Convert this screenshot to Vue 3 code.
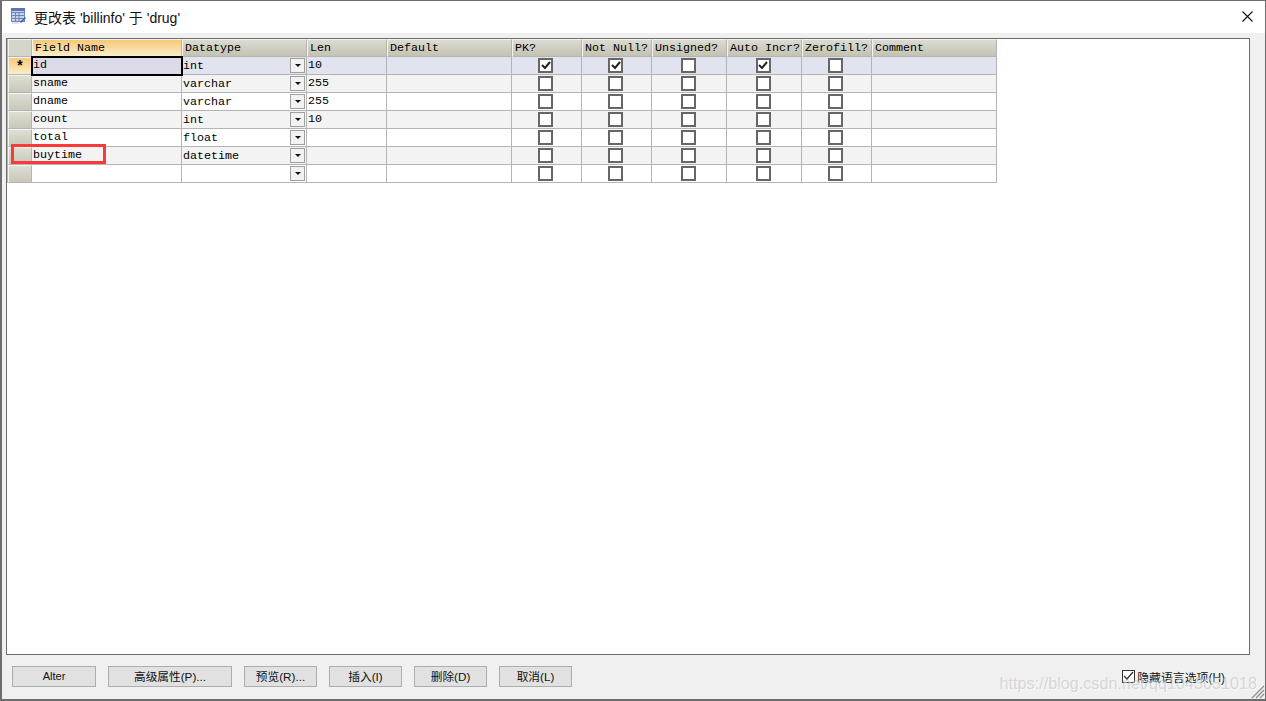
<template>
  <div class="window">
    <div class="titlebar">
      <svg class="app-icon" width="16" height="16" viewBox="0 0 16 16">
        <rect x="0.5" y="0.5" width="13" height="13" fill="#c9d3ee" stroke="#6f84bd" />
        <path d="M1 4.5h12M1 7.5h12M1 10.5h12M4.5 4v9M8 4v9" stroke="#6f84bd" />
        <rect x="0" y="0" width="14" height="3" fill="#5b74b5" />
        <path d="M9 14l5-5 1 1-5 5z" fill="#2d62a8" />
        <path d="M1 15h7" stroke="#c5c5c5" />
      </svg>
      <span class="title">更改表 'billinfo' 于 'drug'</span>
      <svg class="close" width="11" height="11" viewBox="0 0 11 11">
        <path d="M.5.5l10 10M10.5.5l-10 10" stroke="#111" stroke-width="1.1" fill="none" />
      </svg>
    </div>

    <div class="panel">
      <div class="grid">
        <div class="corner"></div>
        <div
          v-for="(col, i) in columns"
          :key="col"
          class="head"
          :class="{ active: i === 0 }"
        >{{ col }}</div>

        <template v-for="(row, r) in rows" :key="r">
          <div class="row-head" :class="{ active: r === 0 }">{{ r === 0 ? '*' : '' }}</div>
          <div class="cell name" :class="rowClass(r)">
            <span>{{ row.name }}</span>
          </div>
          <div class="cell type" :class="rowClass(r)">
            <span class="type-text">{{ row.type }}</span>
            <span class="drop"><i></i></span>
          </div>
          <div class="cell name" :class="rowClass(r)"><span>{{ row.len }}</span></div>
          <div class="cell" :class="rowClass(r)"></div>
          <div v-for="(on, c) in row.flags" :key="c" class="cell check" :class="rowClass(r)">
            <span class="box">
              <svg v-if="on" width="10" height="9" viewBox="0 0 10 9">
                <path d="M1 4l3 3 5-6" stroke="#222" stroke-width="2" fill="none" />
              </svg>
            </span>
          </div>
          <div class="cell" :class="rowClass(r)"></div>
        </template>
      </div>
      <div class="marker"></div>
    </div>

    <div class="footer">
      <button class="alter">Alter</button>
      <button class="adv">高级属性(P)...</button>
      <button class="preview">预览(R)...</button>
      <button class="small">插入(I)</button>
      <button class="small">删除(D)</button>
      <button class="small">取消(L)</button>
      <label class="hide-lang">
        <span class="mini-box">
          <svg width="11" height="10" viewBox="0 0 11 10">
            <path d="M1 5l3 3 6-7" stroke="#333" stroke-width="1.3" fill="none" />
          </svg>
        </span>
        隐藏语言选项(H)
      </label>
    </div>

    <div class="watermark">https://blog.csdn.net/qq1043051018</div>
    <svg class="grip" width="14" height="14" viewBox="0 0 14 14">
      <path d="M13 1L1 13M13 5L5 13M13 9L9 13" stroke="#8e8e8e" stroke-width="1.2" fill="none" />
    </svg>
  </div>
</template>

<script setup>
const columns = [
  'Field Name', 'Datatype', 'Len', 'Default', 'PK?', 'Not Null?',
  'Unsigned?', 'Auto Incr?', 'Zerofill?', 'Comment',
]

const rows = [
  { name: 'id', type: 'int', len: '10', flags: [true, true, false, true, false] },
  { name: 'sname', type: 'varchar', len: '255', flags: [false, false, false, false, false] },
  { name: 'dname', type: 'varchar', len: '255', flags: [false, false, false, false, false] },
  { name: 'count', type: 'int', len: '10', flags: [false, false, false, false, false] },
  { name: 'total', type: 'float', len: '', flags: [false, false, false, false, false] },
  { name: 'buytime', type: 'datetime', len: '', flags: [false, false, false, false, false] },
  { name: '', type: '', len: '', flags: [false, false, false, false, false] },
]

const rowClass = (r) => {
  if (r === 0) return 'selected'
  return r % 2 === 1 ? 'alt' : ''
}
</script>

<style>
html, body {
  margin: 0;
  overflow: hidden;
}
</style>

<style scoped>
.window {
  position: relative;
  box-sizing: border-box;
  width: 1266px;
  height: 701px;
  display: flex;
  flex-direction: column;
  background: #f0f0f0;
  border: 1px solid #6d6d6d;
  border-left-width: 2px;
  border-bottom-width: 2px;
  font-family: "Liberation Sans", "Noto Sans CJK SC", sans-serif;
  color: #111;
}

.titlebar {
  height: 32px;
  flex: none;
  display: flex;
  align-items: center;
  background: #fff;
  padding: 0 12px 0 9px;
}

.app-icon {
  margin-right: 7px;
  margin-bottom: 2px;
}

.title {
  font-size: 14px;
  margin-bottom: 1px;
}

.close {
  margin-left: auto;
  margin-bottom: 2px;
}

.panel {
  position: relative;
  flex: 1;
  margin: 5px 15px 0 4px;
  background: #fff;
  border: 1px solid #6d6d6d;
}

.grid {
  display: grid;
  grid-template-columns: 24px 150px 125px 80px 125px 70px 70px 75px 75px 70px 125px;
  grid-template-rows: 18px repeat(7, 18px);
  width: max-content;
  border-left: 1px solid #b4b4b4;
  font-family: "Liberation Mono", monospace;
  font-size: 11.67px;
  color: #000;
}

.corner,
.head,
.row-head {
  box-sizing: border-box;
  border: 1px solid #f4f4f0;
  border-right: 1px solid #b4b4b4;
  border-bottom: 1px solid #b4b4b4;
}

.corner {
  background: #d6d5c9;
}

.head {
  padding-left: 2px;
  line-height: 16px;
  white-space: nowrap;
  overflow: hidden;
  background: linear-gradient(#dcdbd1, #c3c2b2);
}

.head.active {
  background: linear-gradient(#f7c878, #fbeec8);
}

.row-head {
  background: linear-gradient(#dfded4, #c8c7b8);
  text-align: center;
  line-height: 18px;
  font-size: 14px;
  font-weight: bold;
}

.row-head.active {
  background: linear-gradient(#f7c878, #fbeec8);
}

.cell {
  box-sizing: border-box;
  position: relative;
  background: #fff;
  border-right: 1px solid #b4b4b4;
  border-bottom: 1px solid #b4b4b4;
  white-space: nowrap;
  line-height: 14px;
}

.cell.alt {
  background: #f3f3f3;
}

.cell.selected {
  background: #e1e4ee;
}

.name {
  padding: 1px 0 0 1px;
}

.row-head.active + .name {
  z-index: 1;
  background: #dcdce8;
  outline: 2px solid #000;
  outline-offset: -1px;
}

.type {
  display: flex;
  align-items: center;
  padding-left: 1px;
}

.type-text {
  flex: 1;
}

.drop {
  box-sizing: border-box;
  width: 15px;
  height: 15px;
  margin-right: 1px;
  display: flex;
  align-items: center;
  justify-content: center;
  background: #f2f2f2;
  border: 1px solid #a0a0a0;
}

.drop i {
  width: 0;
  height: 0;
  border-left: 3px solid transparent;
  border-right: 3px solid transparent;
  border-top: 3px solid #111;
}

.check {
  display: flex;
  align-items: center;
  justify-content: center;
  padding-right: 2px;
}

.box {
  box-sizing: border-box;
  width: 15px;
  height: 15px;
  display: flex;
  align-items: center;
  justify-content: center;
  background: #fff;
  border: 2px solid #666;
}

.marker {
  position: absolute;
  z-index: 2;
  left: 4px;
  top: 105px;
  width: 95px;
  height: 20px;
  box-sizing: border-box;
  border: 3px solid #f83a3a;
}

.footer {
  flex: none;
  height: 44px;
  display: flex;
  align-items: center;
  gap: 12px;
  padding: 0 15px 2px 10px;
  box-sizing: border-box;
}

button {
  box-sizing: border-box;
  height: 21px;
  padding: 0 0 1px;
  background: #e1e1e1;
  border: 1px solid #adadad;
  font-family: inherit;
  font-size: 11.7px;
  color: #111;
}

.alter {
  width: 84px;
  font-size: 11px;
}

.adv {
  width: 124px;
}

.preview,
.small {
  width: 73px;
}

.hide-lang {
  margin-left: auto;
  display: flex;
  align-items: center;
  gap: 2px;
  font-size: 11.9px;
  margin-right: 25px;
}

.mini-box {
  box-sizing: border-box;
  width: 13px;
  height: 13px;
  display: flex;
  align-items: center;
  justify-content: center;
  background: #fff;
  border: 1px solid #333;
}

.watermark {
  position: absolute;
  right: 8px;
  bottom: 6px;
  font-size: 16.2px;
  color: rgba(185, 185, 185, 0.5);
  text-shadow: 1px 1px 0 rgba(255, 255, 255, 0.5);
  white-space: nowrap;
  pointer-events: none;
}

.grip {
  position: absolute;
  right: 0;
  bottom: 0;
}
</style>
